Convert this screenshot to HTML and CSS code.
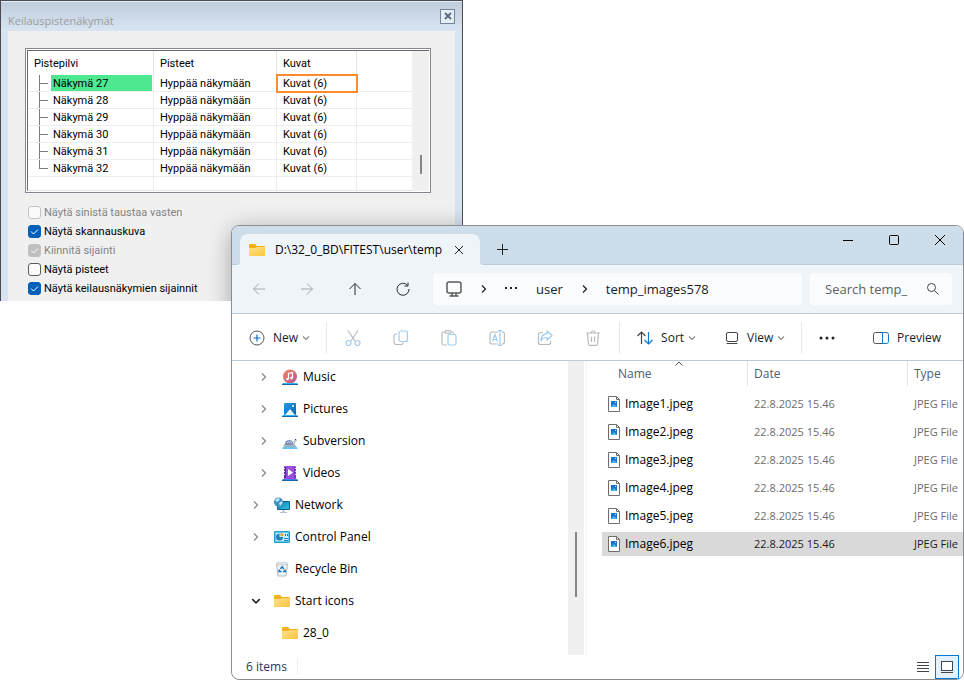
FILE: index.html
```html
<!DOCTYPE html>
<html lang="fi">

<head>
    <meta charset="UTF-8">
    <meta name="viewport" content="width=device-width, initial-scale=1.0">
    <title>Keilauspistenäkymät</title>
    <link rel="stylesheet" href="styles.css">
</head>

<body>
    <!-- Shared icons -->
    <svg class="icon-defs" aria-hidden="true">
        <defs>
            <linearGradient id="folderFill" x1="0" y1="0" x2="1" y2="1">
                <stop offset="0" stop-color="#ffe08a" />
                <stop offset="1" stop-color="#fcc63c" />
            </linearGradient>
            <linearGradient id="musicFill" x1="0" y1="0" x2="1" y2="1">
                <stop offset="0" stop-color="#ee8a5a" />
                <stop offset="1" stop-color="#b4549c" />
            </linearGradient>
            <linearGradient id="blueFill" x1="0" y1="0" x2="1" y2="1">
                <stop offset="0" stop-color="#1f9be8" />
                <stop offset="1" stop-color="#0a66b8" />
            </linearGradient>
            <linearGradient id="screenFill" x1="0" y1="0" x2="1" y2="1">
                <stop offset="0" stop-color="#1679b8" />
                <stop offset="1" stop-color="#2cc6dc" />
            </linearGradient>
            <symbol id="folder" viewBox="0 0 16 16">
                <path d="M0 3a1 1 0 0 1 1-1h5l2 2h7a1 1 0 0 1 1 1v3H0z" fill="#f5b012" />
                <path d="M0 6h6l2-1h8v8a1 1 0 0 1-1 1H1a1 1 0 0 1-1-1z" fill="url(#folderFill)" />
            </symbol>
            <symbol id="chevron-right" viewBox="0 0 8 8">
                <path d="M2 0.5 5.5 4 2 7.500" fill="none" stroke="currentColor" stroke-width="1.2" />
            </symbol>
            <symbol id="chevron-down" viewBox="0 0 8 8">
                <path d="M1 2.500 4 5.500 7 2.500" fill="none" stroke="currentColor" stroke-width="1.2" />
            </symbol>
            <symbol id="picture-file" viewBox="0 0 12 16">
                <path d="M0.500 0.500h8l3 3v12h-11z" fill="#fff" stroke="#6e6e6e" />
                <path d="M8.500 0.500v3h3" fill="none" stroke="#6e6e6e" />
                <path d="M3 5h6v6H3z" fill="#1b74d0" />
                <path d="M3 11l3-3 3 3z" fill="#4db8f4" />
                <path d="M7 6h1v1H7z" fill="#bfe4ff" />
            </symbol>
        </defs>
    </svg>

    <main class="desktop">
        <section class="dialog">
            <header class="dialog-title">
                <h1>Keilauspistenäkymät</h1>
                <button type="button" class="dialog-close" aria-label="Sulje">
                    <svg width="8" height="8" viewBox="0 0 8 8"><path d="M1 1l6 6M7 1L1 7" stroke="#5f6f82" stroke-width="2" /></svg>
                </button>
            </header>

            <div class="dialog-body">
                <div class="list-box">
                    <table class="view-table">
                        <thead>
                            <tr>
                                <th class="col-cloud">Pistepilvi</th>
                                <th class="col-points">Pisteet</th>
                                <th class="col-images">Kuvat</th>
                                <th></th>
                            </tr>
                        </thead>
                        <tbody>
                            <tr>
                                <td class="tree-cell"><span class="view-name active">Näkymä 27</span></td>
                                <td>Hyppää näkymään</td>
                                <td class="marked">Kuvat (6)</td>
                                <td></td>
                            </tr>
                            <tr>
                                <td class="tree-cell"><span class="view-name">Näkymä 28</span></td>
                                <td>Hyppää näkymään</td>
                                <td>Kuvat (6)</td>
                                <td></td>
                            </tr>
                            <tr>
                                <td class="tree-cell"><span class="view-name">Näkymä 29</span></td>
                                <td>Hyppää näkymään</td>
                                <td>Kuvat (6)</td>
                                <td></td>
                            </tr>
                            <tr>
                                <td class="tree-cell"><span class="view-name">Näkymä 30</span></td>
                                <td>Hyppää näkymään</td>
                                <td>Kuvat (6)</td>
                                <td></td>
                            </tr>
                            <tr>
                                <td class="tree-cell"><span class="view-name">Näkymä 31</span></td>
                                <td>Hyppää näkymään</td>
                                <td>Kuvat (6)</td>
                                <td></td>
                            </tr>
                            <tr>
                                <td class="tree-cell last"><span class="view-name">Näkymä 32</span></td>
                                <td>Hyppää näkymään</td>
                                <td>Kuvat (6)</td>
                                <td></td>
                            </tr>
                            <tr class="empty-row">
                                <td></td>
                                <td></td>
                                <td></td>
                                <td></td>
                            </tr>
                        </tbody>
                    </table>
                    <div class="list-scroll"><span class="list-thumb"></span></div>
                </div>

                <form class="options">
                    <label class="disabled"><input type="checkbox" disabled>Näytä sinistä taustaa vasten</label>
                    <label><input type="checkbox" checked>Näytä skannauskuva</label>
                    <label class="disabled"><input type="checkbox" checked disabled>Kiinnitä sijainti</label>
                    <label><input type="checkbox">Näytä pisteet</label>
                    <label><input type="checkbox" checked>Näytä keilausnäkymien sijainnit</label>
                </form>
            </div>
        </section>

        <section class="explorer" lang="en">
            <header class="tab-bar">
                <div class="tab-edge"></div>
                <div class="tab-slot">
                    <div class="tab">
                        <svg width="16" height="16"><use href="#folder" /></svg>
                        <span class="tab-title">D:\32_0_BD\FITEST\user\temp</span>
                        <button type="button" aria-label="Close tab">
                            <svg width="10" height="10" viewBox="0 0 10 10"><path d="M1 1l8 8M9 1L1 9" stroke="#222" /></svg>
                        </button>
                    </div>
                </div>
                <div class="tab-rest">
                    <button type="button" class="new-tab" aria-label="New tab">
                        <svg width="11" height="11" viewBox="0 0 11 11"><path d="M5.500 0v11M0 5.500h11" stroke="#222" /></svg>
                    </button>
                    <div class="window-buttons">
                        <button type="button" aria-label="Minimize">
                            <svg width="10" height="10" viewBox="0 0 10 10"><path d="M0 5.500h10" stroke="#000" /></svg>
                        </button>
                        <button type="button" aria-label="Maximize">
                            <svg width="10" height="10" viewBox="0 0 10 10"><rect x="0.500" y="0.500" width="9" height="9" rx="1" fill="none" stroke="#000" /></svg>
                        </button>
                        <button type="button" aria-label="Close">
                            <svg width="10" height="10" viewBox="0 0 10 10"><path d="M0 0l10 10M10 0L0 10" stroke="#000" /></svg>
                        </button>
                    </div>
                </div>
            </header>

            <nav class="nav-bar">
                <div class="nav-buttons">
                    <button type="button" aria-label="Back" disabled>
                        <svg width="14" height="14" viewBox="0 0 14 14"><path d="M13 7H1.500M7 1.500 1.500 7 7 12.500" /></svg>
                    </button>
                    <button type="button" aria-label="Forward" disabled>
                        <svg width="14" height="14" viewBox="0 0 14 14"><path d="M1 7h11.500M7 1.500 12.500 7 7 12.500" /></svg>
                    </button>
                    <button type="button" aria-label="Up">
                        <svg width="14" height="14" viewBox="0 0 14 14"><path d="M7 13V1.500M1.500 7 7 1.500 12.500 7" /></svg>
                    </button>
                    <button type="button" aria-label="Refresh">
                        <svg width="14" height="14" viewBox="0 0 14 14"><path d="M11.500 3.300A6 6 0 1 0 13 7M12 0.500v3.500H8.500" /></svg>
                    </button>
                </div>
                <div class="address">
                    <svg width="16" height="16" viewBox="0 0 16 16" fill="none" stroke="#5a5a5a" stroke-width="1.500"><rect x="1" y="1" width="14" height="11" rx="2" /><path d="M6 12v2.500M10 12v2.500M3.500 15h9" /></svg>
                    <svg class="crumb-arrow" width="8" height="8"><use href="#chevron-right" /></svg>
                    <svg class="crumb-more" width="12" height="8" viewBox="0 0 12 8" fill="#222"><path d="M0 2h2v2H0zM5 2h2v2H5zM10 2h2v2h-2z" /></svg>
                    <a href="#">user</a>
                    <svg class="crumb-arrow" width="8" height="8"><use href="#chevron-right" /></svg>
                    <a href="#">temp_images578</a>
                </div>
                <div class="search">
                    <input type="text" placeholder="Search temp_" aria-label="Search">
                    <svg width="12" height="12" viewBox="0 0 12 12" fill="none" stroke="#444"><circle cx="4.500" cy="4.500" r="4" /><path d="M7.500 7.500l4 4" /></svg>
                </div>
            </nav>

            <div class="toolbar">
                <div class="tool-group">
                    <button type="button" class="text-tool">
                        <svg width="16" height="16" viewBox="0 0 16 16" fill="none"><circle cx="8" cy="8" r="7" stroke="#555" /><path d="M8 4.500v7M4.500 8h7" stroke="#0a6cc4" stroke-width="1.200" /></svg>
                        New
                        <svg class="caret" width="8" height="8"><use href="#chevron-down" /></svg>
                    </button>
                </div>
                <div class="tool-group icon-tools">
                    <button type="button" aria-label="Cut" disabled>
                        <svg width="16" height="16" viewBox="0 0 16 16" fill="none"><path d="M3 0.500l7 10.500M13 0.500L6 11" stroke="#bbb" stroke-width="1.200" /><circle cx="3.500" cy="13" r="2.500" stroke="#9ccdf0" stroke-width="1.200" /><circle cx="12.500" cy="13" r="2.500" stroke="#9ccdf0" stroke-width="1.200" /></svg>
                    </button>
                    <button type="button" aria-label="Copy" disabled>
                        <svg width="16" height="16" viewBox="0 0 16 16" fill="none" stroke-width="1.200"><path d="M4 4H3a2 2 0 0 0-2 2v6a2.500 2.500 0 0 0 2.500 2.500H8a2 2 0 0 0 2-2" stroke="#bbb" /><rect x="6" y="1" width="8.500" height="10.500" rx="2" stroke="#9ccdf0" /></svg>
                    </button>
                    <button type="button" aria-label="Paste" disabled>
                        <svg width="16" height="16" viewBox="0 0 16 16" fill="none" stroke-width="1.200"><path d="M6 15H2.500A1.500 1.500 0 0 1 1 13.500v-10A1.500 1.500 0 0 1 2.500 2H4M10 2h1a1.500 1.500 0 0 1 1.500 1.500" stroke="#bbb" /><rect x="4" y="0.600" width="6" height="2.500" rx="1.200" stroke="#bbb" /><rect x="7" y="4.500" width="8" height="10.500" rx="1.500" stroke="#9ccdf0" /></svg>
                    </button>
                    <button type="button" aria-label="Rename" disabled>
                        <svg width="16" height="16" viewBox="0 0 16 16" fill="none" stroke-width="1.200"><path d="M9 2H3a2 2 0 0 0-2 2v8a2 2 0 0 0 2 2h6M13 2a2 2 0 0 1 2.400 2v8a2 2 0 0 1-2.400 2" stroke="#bbb" /><path d="M3.500 11.500 6 4.500l2.500 7M4.300 9.500h3.400M11 1v14M9 0.600h4M9 15.400h4" stroke="#9ccdf0" /></svg>
                    </button>
                    <button type="button" aria-label="Share" disabled>
                        <svg width="16" height="16" viewBox="0 0 16 16" fill="none" stroke-width="1.200"><path d="M6 2.500H3.500A2 2 0 0 0 1.500 4.500v8a2 2 0 0 0 2 2h8a2 2 0 0 0 2-2V11" stroke="#bbb" /><path d="M10 1l5 4.500-5 4.500V7.500C7 7.500 5 8.500 4 11c0-4.500 2.500-7 6-7.300z" stroke="#9ccdf0" stroke-linejoin="round" /></svg>
                    </button>
                    <button type="button" aria-label="Delete" disabled>
                        <svg width="16" height="16" viewBox="0 0 16 16" fill="none" stroke="#bbb" stroke-width="1.200"><path d="M1 3h14M6 3a2 2 0 0 1 4 0M2.500 3l1 11a1.500 1.500 0 0 0 1.500 1.400h6a1.500 1.500 0 0 0 1.500-1.400l1-11M6.500 6.500v5.500M9.500 6.500v5.500" /></svg>
                    </button>
                </div>
                <div class="tool-group sort-tools">
                    <button type="button" class="text-tool">
                        <svg width="16" height="16" viewBox="0 0 16 16" fill="none" stroke-width="1.200"><path d="M4.500 14V2M0.500 6l4-4 4 4" stroke="#444" /><path d="M11.500 2v12M7.500 10l4 4 4-4" stroke="#0a78d4" /></svg>
                        Sort
                        <svg class="caret" width="8" height="8"><use href="#chevron-down" /></svg>
                    </button>
                    <button type="button" class="text-tool">
                        <svg width="14" height="14" viewBox="0 0 14 14" fill="none" stroke="#444"><rect x="1.500" y="1.500" width="11" height="9" rx="1.500" /><path d="M1.500 12.500h11" /></svg>
                        View
                        <svg class="caret" width="8" height="8"><use href="#chevron-down" /></svg>
                    </button>
                </div>
                <div class="tool-group more-tools">
                    <button type="button" aria-label="More">
                        <svg width="16" height="4" viewBox="0 0 16 4" fill="#222"><circle cx="2" cy="2" r="1.500" /><circle cx="8" cy="2" r="1.500" /><circle cx="14" cy="2" r="1.500" /></svg>
                    </button>
                    <button type="button" class="text-tool">
                        <svg width="16" height="12" viewBox="0 0 16 12" fill="none"><path d="M9.500 0.500h-7a2 2 0 0 0-2 2v7a2 2 0 0 0 2 2h7" stroke="#555" /><path d="M9.500 0.500h4a2 2 0 0 1 2 2v7a2 2 0 0 1-2 2h-4z" stroke="#0a78d4" /></svg>
                        Preview
                    </button>
                </div>
            </div>

            <div class="panes">
                <ul class="folder-tree">
                    <li class="child">
                        <svg class="twist" width="10" height="8"><use href="#chevron-right" /></svg>
                        <svg width="16" height="16" viewBox="0 0 16 16"><circle cx="8" cy="7.500" r="7" fill="url(#musicFill)" /><path d="M6.500 10V4.500l4-1V9" fill="none" stroke="#fff" stroke-width="1.200" /><circle cx="5.500" cy="10" r="1.300" fill="#fff" /><circle cx="9.500" cy="9" r="1.300" fill="#fff" /><path d="M1 14h14l1 1H0z" fill="#35b2f2" /><path d="M0 15h16v1H0z" fill="#1668a8" /></svg>
                        Music
                    </li>
                    <li class="child">
                        <svg class="twist" width="10" height="8"><use href="#chevron-right" /></svg>
                        <svg width="16" height="16" viewBox="0 0 16 16"><rect x="2" y="2" width="12" height="12" rx="1" fill="url(#blueFill)" /><path d="M3 14l5-6 5 6z" fill="#e8f5ff" /><circle cx="11" cy="5" r="1" fill="#fff" /><path d="M1 14h14l1 1H0z" fill="#35b2f2" /><path d="M0 15h16v1H0z" fill="#1668a8" /></svg>
                        Pictures
                    </li>
                    <li class="child">
                        <svg class="twist" width="10" height="8"><use href="#chevron-right" /></svg>
                        <svg width="16" height="16" viewBox="0 0 16 16"><path d="M2 13h12l2 3H0z" fill="#62c6f5" /><path d="M1 12l2-1h9l2 2-2 1.500h-2l-1-1-3 1H4L3 13z" fill="#a3b3be" /><path d="M3 11c0-3 2-4 4.500-4 2 0 3.500 1.500 4 4l-1 1H4z" fill="#7f90b8" /><path d="M5 10l1.500-1.500L8 10M8.500 8.500l1.500 2" fill="none" stroke="#c9d4ec" /><path d="M11 11l1-4 2-1 1.500 1.500-2 1-.5 2.500z" fill="#b5c2ce" /><path d="M13 6h1v1h-1z" fill="#334" /></svg>
                        Subversion
                    </li>
                    <li class="child">
                        <svg class="twist" width="10" height="8"><use href="#chevron-right" /></svg>
                        <svg width="16" height="16" viewBox="0 0 16 16"><rect x="2" y="1" width="12" height="14" rx="1" fill="#9a4fe0" /><path d="M2 2h2v11H2z" fill="#5b2aa0" /><path d="M12 2h2v11h-2z" fill="#7438c4" /><path d="M2 3h1v1H2zM2 6h1v1H2zM2 9h1v1H2zM13 3h1v1h-1zM13 6h1v1h-1zM13 9h1v1h-1z" fill="#eadcff" /><path d="M6 4l5 3.500L6 11z" fill="#fff" /><path d="M1 14h14l1 1H0z" fill="#4a7de8" /><path d="M0 15h16v1H0z" fill="#1668a8" /></svg>
                        Videos
                    </li>
                    <li>
                        <svg class="twist" width="10" height="8"><use href="#chevron-right" /></svg>
                        <svg width="16" height="16" viewBox="0 0 16 16"><rect x="3" y="4" width="13" height="9" rx="1" fill="#145f8e" /><rect x="4" y="5" width="11" height="7" fill="url(#screenFill)" /><path d="M8.500 13h2v2h2.500v1H6v-1h2.500z" fill="#b8c0c8" /><circle cx="4.500" cy="5" r="4.500" fill="#3d93c8" /><path d="M1 3l3-2 2 1-1.500 2L3 5zM5 6l3-2 .5 2L6 9z" fill="#c4e8f6" /></svg>
                        Network
                    </li>
                    <li>
                        <svg class="twist" width="10" height="8"><use href="#chevron-right" /></svg>
                        <svg width="16" height="16" viewBox="0 0 16 16"><rect x="0.500" y="2.500" width="15" height="11" rx="0.500" fill="#62c8f0" stroke="#1b9cd4" /><path d="M2 4h12v8H2z" fill="#c4ecfb" /><path d="M5.500 4.500v3.500h3.500a3.500 3.500 0 1 1-3.500-3.500z" fill="#1d7fc4" /><path d="M6.500 4v3h3a3 3 0 0 0-3-3z" fill="#f19b26" /><path d="M11 5h1v2h-1zM13 5h1v2h-1zM10 9h4v1h-4zM10 11h4v1h-4z" fill="#1d7fc4" /></svg>
                        Control Panel
                    </li>
                    <li>
                        <span class="twist"></span>
                        <svg width="16" height="16" viewBox="0 0 16 16"><path d="M2.500 3h11l-1.500 12H4z" fill="#eef2f5" stroke="#b3bcc4" /><path d="M2 2.500 5 1l2 1 3-1 4 1.500-1 1.500H3z" fill="#dfe5ea" stroke="#a9b2ba" stroke-width="0.500" /><path d="M8 5.500 6.500 8M8 5.500 9.800 8M5.500 8.500 5 10.500h2.500M11 8.500l.3 2H9" fill="none" stroke="#1672c4" stroke-width="1.400" /></svg>
                        Recycle Bin
                    </li>
                    <li>
                        <svg class="twist open" width="10" height="10"><use href="#chevron-down" /></svg>
                        <svg width="16" height="16"><use href="#folder" /></svg>
                        Start icons
                    </li>
                    <li class="child">
                        <span class="twist"></span>
                        <svg width="16" height="16"><use href="#folder" /></svg>
                        28_0
                    </li>
                </ul>
                <div class="tree-scroll"><span class="tree-thumb"></span></div>

                <div class="file-pane">
                    <table class="file-table">
                        <thead>
                            <tr>
                                <th class="col-name">Name<svg class="sort-mark" width="8" height="5" viewBox="0 0 8 5"><path d="M0.500 4.500 4 1l3.500 3.500" fill="none" stroke="#555" /></svg></th>
                                <th class="col-date">Date</th>
                                <th class="col-type">Type</th>
                            </tr>
                        </thead>
                        <tbody>
                            <tr>
                                <td><span class="file-name"><svg width="12" height="16"><use href="#picture-file" /></svg>Image1.jpeg</span></td>
                                <td>22.8.2025 15.46</td>
                                <td>JPEG File</td>
                            </tr>
                            <tr>
                                <td><span class="file-name"><svg width="12" height="16"><use href="#picture-file" /></svg>Image2.jpeg</span></td>
                                <td>22.8.2025 15.46</td>
                                <td>JPEG File</td>
                            </tr>
                            <tr>
                                <td><span class="file-name"><svg width="12" height="16"><use href="#picture-file" /></svg>Image3.jpeg</span></td>
                                <td>22.8.2025 15.46</td>
                                <td>JPEG File</td>
                            </tr>
                            <tr>
                                <td><span class="file-name"><svg width="12" height="16"><use href="#picture-file" /></svg>Image4.jpeg</span></td>
                                <td>22.8.2025 15.46</td>
                                <td>JPEG File</td>
                            </tr>
                            <tr>
                                <td><span class="file-name"><svg width="12" height="16"><use href="#picture-file" /></svg>Image5.jpeg</span></td>
                                <td>22.8.2025 15.46</td>
                                <td>JPEG File</td>
                            </tr>
                            <tr class="selected">
                                <td><span class="file-name"><svg width="12" height="16"><use href="#picture-file" /></svg>Image6.jpeg</span></td>
                                <td>22.8.2025 15.46</td>
                                <td>JPEG File</td>
                            </tr>
                        </tbody>
                    </table>
                </div>
            </div>

            <footer class="status-bar">
                <span class="item-count">6 items</span>
                <button type="button" aria-label="Details view">
                    <svg width="12" height="12" viewBox="0 0 12 12"><path d="M0 1.500h12M0 4.500h12M0 7.500h12M0 10.500h12" stroke="#444" /></svg>
                </button>
                <button type="button" class="current" aria-label="Large icons">
                    <svg width="12" height="12" viewBox="0 0 12 12"><rect x="0.500" y="0.500" width="11" height="9" fill="#fff" stroke="#444" /><path d="M0 11.500h12" stroke="#444" /></svg>
                </button>
            </footer>
        </section>
    </main>
</body>

</html>
```
FILE: styles.css
```css
:root {
    --frame: #cddde9;
    --nav: #eff4f9;
    --line: #bccbd8;
    --field: #fbfcfe;
    --blue: #005fb8;
}

* {
    box-sizing: border-box;
    margin: 0;
    padding: 0;
}

body {
    background-color: #fff;
    font-family: "Open Sans", "Noto Sans", sans-serif;
    font-size: 12px;
    line-height: 16px;
    color: #1b1b1b;
}

button {
    display: flex;
    align-items: center;
    justify-content: center;
    border: none;
    background: none;
    font: inherit;
    color: inherit;
}

svg {
    display: block;
    flex-shrink: 0;
}

.icon-defs {
    position: absolute;
    width: 0;
    height: 0;
}

.desktop {
    position: relative;
    min-height: 100vh;
    overflow: hidden;
}

/* Point cloud view dialog */
.dialog {
    position: absolute;
    top: 0;
    left: 0;
    width: 463px;
    overflow: hidden;
    border: 1px solid #4a4a50;
    border-bottom: none;
    background: linear-gradient(#bfccdb, #d8e4f1 30px, #d8e2f0);
    box-shadow: inset 0 1px 0 #e6edf5;
    padding: 0 7px;
    font-family: Roboto, "Liberation Sans", sans-serif;
    font-size: 11px;
    line-height: 13px;
    color: #000;
}

/* Shade that the front window throws on the dialog */
.dialog::after {
    content: "";
    position: absolute;
    top: 225px;
    left: 231px;
    right: -20px;
    bottom: -100px;
    border-radius: 8px;
    box-shadow: 0 4px 24px rgba(0, 0, 0, 0.35);
}

.dialog-title {
    display: flex;
    align-items: center;
    justify-content: space-between;
    height: 30px;
    padding-top: 4px;
}

.dialog-title h1 {
    padding-top: 4px;
    font-family: "Open Sans", "Noto Sans", sans-serif;
    font-size: 11px;
    font-weight: normal;
    color: #9a9da1;
}

.dialog-close {
    width: 15px;
    height: 15px;
    margin-bottom: 4px;
    border: 1px solid #72849a;
    background-color: #e6eef7;
}

.dialog-body {
    padding: 17px 24px 6px 17px;
    background-color: #f0f0f0;
}

.list-box {
    display: flex;
    height: 145px;
    border: 1px solid #828790;
    background-color: #fff;
    padding: 1px;
}

.view-table {
    flex: 1;
    height: 141px;
    border-collapse: separate;
    border-spacing: 0;
    table-layout: fixed;
    border-top: 1px solid #696969;
    border-left: 1px solid #696969;
    border-bottom: 1px solid #e3e3e3;
}

.view-table th,
.view-table td {
    height: 17px;
    padding: 0 0 0 6px;
    border-right: 1px solid #e9edf6;
    border-bottom: 1px solid #ededed;
    text-align: left;
    font-weight: normal;
    white-space: nowrap;
}

.view-table th {
    height: 24px;
    border-right-color: #e3e3e3;
    border-bottom: none;
}

.view-table th:last-child,
.view-table td:last-child {
    border-right: none;
}

.view-table .empty-row td {
    height: 13px;
    border-bottom: none;
}

.col-cloud {
    width: 126px;
}

.col-points {
    width: 123px;
}

.col-images {
    width: 80px;
}

.view-table .tree-cell {
    position: relative;
    padding: 0 1px 0 23px;
}

/* Branch lines of the tree */
.tree-cell::before {
    content: "";
    position: absolute;
    top: 0;
    left: 11px;
    width: 8px;
    height: 8px;
    border-left: 1px solid #7d7d7d;
    border-bottom: 1px solid #7d7d7d;
}

.tree-cell::after {
    content: "";
    position: absolute;
    top: 8px;
    bottom: 0;
    left: 11px;
    border-left: 1px solid #7d7d7d;
}

.tree-cell.last::after {
    display: none;
}

.view-name {
    display: block;
    padding: 2px 2px 1px;
}

.view-name.active {
    background-color: #4de890;
}

.view-table .marked {
    outline: 2px solid #ff8a30;
    outline-offset: -1px;
}

.list-scroll {
    display: flex;
    flex-direction: column;
    justify-content: flex-end;
    align-items: center;
    width: 17px;
    padding-bottom: 17px;
    border-top: 1px solid #696969;
    background-color: #f0f0f0;
}

.list-thumb {
    width: 2px;
    height: 19px;
    background-color: #858585;
}

.options {
    display: flex;
    flex-direction: column;
    gap: 6px;
    padding: 13px 0 0 3px;
}

.options label {
    display: flex;
    align-items: center;
    gap: 3px;
}

.options .disabled {
    color: #838383;
}

.options input {
    appearance: none;
    width: 13px;
    height: 13px;
    border: 1px solid #5c5c5c;
    border-radius: 3px;
    background: #fbfbfb center no-repeat;
}

.options input:checked {
    border-color: var(--blue);
    background-color: var(--blue);
    background-image: url("data:image/svg+xml,%3Csvg xmlns='http://www.w3.org/2000/svg' width='9' height='9'%3E%3Cpath d='M1 4.500l2.500 2.500 4.500-4.500' fill='none' stroke='white'/%3E%3C/svg%3E");
}

.options input:disabled {
    border-color: #c3c3c3;
}

.options input:checked:disabled {
    background-color: #bfbfbf;
}

/* File explorer window */
.explorer {
    position: absolute;
    top: 225px;
    right: 0;
    bottom: 0;
    left: 231px;
    display: flex;
    flex-direction: column;
    overflow: hidden;
    border: 1px solid #8a8d92;
    border-radius: 8px;
    background-color: #fff;
}

.tab-bar {
    display: flex;
    height: 39px;
    background-color: var(--nav);
}

.tab-edge {
    width: 8px;
    border-bottom: 1px solid var(--line);
    border-bottom-right-radius: 4px;
    background-color: var(--frame);
}

.tab-slot {
    width: 240px;
    padding-top: 8px;
    background: linear-gradient(var(--frame) 30px, var(--nav) 30px);
}

.tab {
    display: flex;
    align-items: center;
    height: 31px;
    padding: 0 16px 0 9px;
    border-radius: 8px 8px 0 0;
    background-color: var(--nav);
}

.tab-title {
    flex: 1;
    padding-left: 10px;
    white-space: nowrap;
    color: #000;
}

.tab-rest {
    display: flex;
    flex: 1;
    justify-content: space-between;
    border-bottom: 1px solid var(--line);
    border-bottom-left-radius: 4px;
    background-color: var(--frame);
}

.new-tab {
    width: 44px;
    padding-top: 8px;
}

.window-buttons {
    display: flex;
    height: 28px;
}

.window-buttons button {
    width: 46px;
}

.nav-bar {
    display: flex;
    align-items: center;
    height: 49px;
    padding-right: 11px;
    border-bottom: 1px solid var(--line);
    background-color: var(--nav);
    font-size: 13px;
}

.nav-buttons {
    display: flex;
    width: 201px;
    padding-left: 3px;
}

.nav-buttons button {
    width: 48px;
    height: 32px;
}

.nav-buttons svg {
    fill: none;
    stroke: #2b2b2b;
}

.nav-buttons button:disabled svg {
    stroke: #a5a8ab;
}

.address {
    display: flex;
    flex: 1;
    align-items: center;
    height: 32px;
    padding-left: 13px;
    border-radius: 4px;
    background-color: var(--field);
}

.address a {
    color: #1b1b1b;
    text-decoration: none;
}

.crumb-arrow {
    margin: 0 17px 0 18px;
}

.crumb-more {
    margin-right: 19px;
}

.search {
    display: flex;
    align-items: center;
    width: 142px;
    height: 32px;
    margin-left: 8px;
    padding: 0 13px 0 15px;
    border-radius: 4px;
    background-color: var(--field);
}

.search input {
    flex: 1;
    min-width: 0;
    border: none;
    outline: none;
    background: none;
    font: inherit;
}

.search input::placeholder {
    color: #5f6163;
}

.toolbar {
    display: flex;
    align-items: center;
    height: 47px;
    padding-top: 2px;
    border-bottom: 1px solid var(--line);
}

.tool-group {
    display: flex;
    align-items: center;
    height: 32px;
    padding: 0 16px 0 17px;
    border-right: 1px solid #e6e6e6;
}

.text-tool {
    gap: 8px;
}

.caret {
    margin-left: -4px;
    color: #8a8a8a;
}

.icon-tools {
    padding: 0 2px;
}

.icon-tools button {
    width: 48px;
    height: 32px;
}

.sort-tools {
    gap: 29px;
}

.more-tools {
    flex: 1;
    justify-content: space-between;
    padding-right: 22px;
    border-right: none;
}

.panes {
    display: flex;
    flex: 1;
    min-height: 0;
}

.folder-tree {
    width: 336px;
    overflow: hidden;
    list-style: none;
    color: #000;
}

.folder-tree li {
    display: flex;
    align-items: center;
    gap: 5px;
    height: 32px;
    padding-left: 19px;
}

.folder-tree .child {
    padding-left: 27px;
}

.twist {
    width: 10px;
    margin-right: 8px;
    color: #858585;
}

.twist.open {
    color: #222;
}

.tree-scroll {
    width: 16px;
    padding: 171px 7px 0;
    background-color: #f0f0f0;
}

.tree-thumb {
    display: block;
    width: 2px;
    height: 65px;
    background-color: #858585;
}

.file-pane {
    flex: 1;
    margin-left: 2px;
    padding-left: 15px;
    border-left: 1px solid #f5f5f5;
}

.file-table {
    width: 100%;
    border-collapse: separate;
    border-spacing: 0;
    table-layout: fixed;
    color: #6d6d6d;
}

.file-table th {
    position: relative;
    height: 25px;
    padding-left: 6px;
    border-left: 1px solid #e3e3e3;
    text-align: left;
    font-weight: normal;
    color: #4c607a;
}

.file-table .col-name {
    width: 145px;
    padding-left: 16px;
    border-left: none;
}

.file-table .col-date {
    width: 160px;
}

.sort-mark {
    position: absolute;
    top: 0;
    left: 50%;
}

.file-table td {
    height: 28px;
    padding-left: 7px;
    border: 2px solid transparent;
    border-width: 2px 0;
    background-clip: padding-box;
    font-size: 11px;
    white-space: nowrap;
}

.file-table td:first-child {
    padding-left: 6px;
    font-size: 12px;
}

.file-table tbody::before {
    content: "";
    display: block;
    height: 4px;
}

.file-name {
    display: flex;
    align-items: center;
    gap: 5px;
    color: #000;
}

.file-table .selected td {
    background-color: #d9d9d9;
    color: #1b1b1b;
}

.status-bar {
    display: flex;
    align-items: center;
    height: 24px;
    padding: 0 4px 0 14px;
}

.item-count {
    margin-right: auto;
    padding-right: 10px;
    border-right: 1px solid #f0f0f0;
    color: #1e395b;
}

.status-bar button {
    width: 24px;
    height: 24px;
}

.status-bar .current {
    border: 1px solid #0078d4;
    background-color: #e2f1fb;
}
```
